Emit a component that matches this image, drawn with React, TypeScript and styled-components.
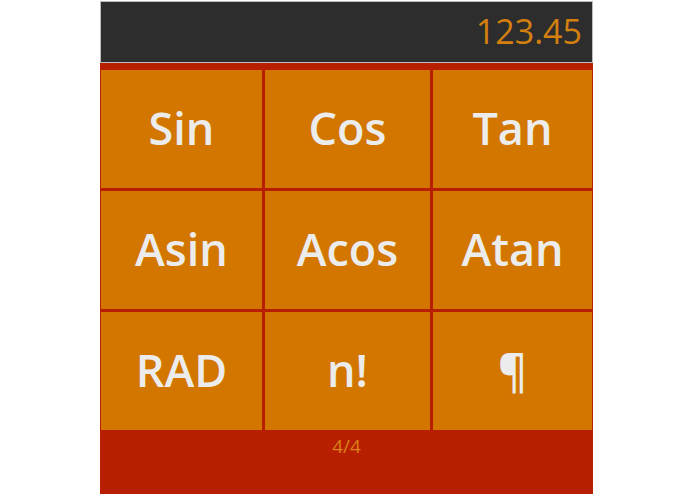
import React from "react";
import styled, { createGlobalStyle } from "styled-components";

const Global = createGlobalStyle`
  html, body { margin: 0; padding: 0; background: #ffffff; }
  body { font-family: "Open Sans", "Noto Sans", sans-serif; }
`;

const Page = styled.div`
  width: 493px;
  margin: 1px 0 0 100px;
  display: flex;
  flex-direction: column;
`;

const Display = styled.div`
  box-sizing: border-box;
  height: 62px;
  background: #2d2d2d;
  border: 1px solid #bcbcbc;
  display: flex;
  align-items: center;
  justify-content: flex-end;
  padding: 0 10px 2px 0;
  color: #d4800f;
  font-size: 34px;
  font-weight: 400;
`;

const Pad = styled.div`
  background: #b81e00;
  padding: 7px 1px 0 1px;
  display: grid;
  grid-template-columns: 161px 165px 159px;
  grid-auto-rows: 118px;
  gap: 3px;
`;

const Key = styled.div`
  background: #d27600;
  display: flex;
  align-items: center;
  justify-content: center;
  color: #ececec;
  font-size: 45px;
  font-weight: 600;
  padding-bottom: 4px;
`;

const Footer = styled.div`
  background: #b81e00;
  height: 64px;
  display: flex;
  justify-content: center;
  padding-top: 3px;
  box-sizing: border-box;
  color: #d9801a;
  font-size: 19px;
`;

const keys = ["Sin", "Cos", "Tan", "Asin", "Acos", "Atan", "RAD", "n!", "¶"];

export default function App() {
  return (
    <>
      <Global />
      <Page>
        <Display>123.45</Display>
        <Pad>
          {keys.map((k) => (
            <Key key={k}>{k}</Key>
          ))}
        </Pad>
        <Footer>4/4</Footer>
      </Page>
    </>
  );
}
